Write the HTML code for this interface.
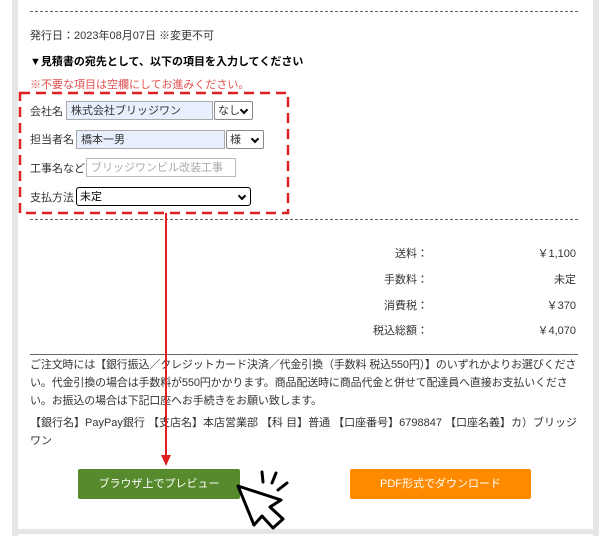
<!DOCTYPE html>
<html><head><meta charset="utf-8"><style>
body{margin:0;width:610px;height:536px;background:#fff;position:relative;overflow:hidden;font-family:"Liberation Sans","Noto Sans CJK JP",sans-serif;font-size:11px;color:#333}
.a{position:absolute;white-space:nowrap}
.inp{position:absolute;height:19px;box-sizing:border-box;border:1px solid #aaa;background:#e8f0fe;font-size:11px;padding:2px 4px;line-height:14px}
.sel{position:absolute;height:19px;box-sizing:border-box;border:1px solid #888;background:#fff;font-size:11px;padding:2px 3px;line-height:14px;border-radius:2px}
.sel:after{content:"";position:absolute;right:5px;top:5px;width:4px;height:4px;border-right:2px solid #000;border-bottom:2px solid #000;transform:rotate(45deg)}
.r{text-align:right}
</style></head><body>
<div class="a" style="left:12px;top:0;width:6px;height:536px;background:#e6e6e6"></div>
<div class="a" style="left:593px;top:0;width:6px;height:536px;background:#e6e6e6"></div>
<div class="a" style="left:12px;top:529px;width:587px;height:5px;background:#e6e6e6"></div>
<div class="a" style="left:30px;top:11px;width:548px;border-top:1px dashed #666"></div>
<div class="a" style="left:30px;top:27px">発行日：2023年08月07日 ※変更不可</div>
<div class="a" style="left:30px;top:53px;font-weight:bold;color:#000">▼見積書の宛先として、以下の項目を入力してください</div>
<div class="a" style="left:30px;top:76px;color:#e05050">※不要な項目は空欄にしてお進みください。</div>
<svg class="a" style="left:18px;top:91px" width="272" height="124"><rect x="2" y="2" width="268" height="120" fill="none" stroke="#e02020" stroke-width="2.5" stroke-dasharray="10,6"/></svg>
<div class="a" style="left:30px;top:103px">会社名</div>
<div class="inp" style="left:66px;top:101px;width:147px">株式会社ブリッジワン</div>
<div class="sel" style="left:214px;top:101px;width:39px">なし</div>
<div class="a" style="left:30px;top:131px">担当者名</div>
<div class="inp" style="left:76px;top:130px;width:149px">橋本一男</div>
<div class="sel" style="left:226px;top:130px;width:38px">様</div>
<div class="a" style="left:30px;top:160px">工事名など</div>
<div class="inp" style="left:86px;top:158px;width:150px;background:#fff;color:#aaa;border-color:#bbb">ブリッジワンビル改装工事</div>
<div class="a" style="left:30px;top:189px">支払方法</div>
<div class="sel" style="left:76px;top:187px;width:175px;border:1px solid #000;border-radius:3px;color:#000">未定</div>
<div class="a" style="left:30px;top:219px;width:548px;border-top:1px dashed #666"></div>
<div class="a r" style="left:330px;top:245px;width:98px">送料：</div><div class="a r" style="left:480px;top:245px;width:96px">￥1,100</div>
<div class="a r" style="left:330px;top:271px;width:98px">手数料：</div><div class="a r" style="left:480px;top:271px;width:96px">未定</div>
<div class="a r" style="left:330px;top:297px;width:98px">消費税：</div><div class="a r" style="left:480px;top:297px;width:96px">￥370</div>
<div class="a r" style="left:330px;top:322px;width:98px">税込総額：</div><div class="a r" style="left:480px;top:322px;width:96px">￥4,070</div>
<div class="a" style="left:30px;top:354px;width:548px;border-top:1px solid #666"></div>
<div class="a" style="left:30px;top:356px;line-height:18px;width:552px;white-space:normal;letter-spacing:-0.15px">ご注文時には【銀行振込／クレジットカード決済／代金引換（手数料 税込550円）】のいずれかよりお選びください。代金引換の場合は手数料が550円かかります。商品配送時に商品代金と併せて配達員へ直接お支払いください。お振込の場合は下記口座へお手続きをお願い致します。</div>
<div class="a" style="left:30px;top:414px;line-height:18px;width:550px;white-space:normal">【銀行名】PayPay銀行 【支店名】本店営業部 【科 目】普通 【口座番号】6798847 【口座名義】カ）ブリッジワン</div>
<div class="a" style="left:78px;top:469px;width:162px;height:30px;background:#568a2c;border-radius:2px;color:#fff;text-align:center;line-height:30px">ブラウザ上でプレビュー</div>
<div class="a" style="left:350px;top:469px;width:181px;height:30px;background:#ff8a00;border-radius:2px;color:#fff;text-align:center;line-height:30px">PDF形式でダウンロード</div>
<svg class="a" style="left:0;top:0" width="610" height="536">
<line x1="166" y1="213" x2="166" y2="458" stroke="#e02020" stroke-width="2"/>
<polygon points="161,455 171,455 166,466" fill="#e02020"/>
<polygon points="238,486 281,500 270,507 283,519 273,528 262,516 254,525" fill="#fff" stroke="#000" stroke-width="3" stroke-linejoin="round"/>
<g stroke="#000" stroke-width="3" stroke-linecap="round">
<line x1="262" y1="472" x2="263" y2="482"/><line x1="276" y1="473" x2="272" y2="483"/><line x1="287" y1="483" x2="278" y2="490"/></g>
</svg>
</body></html>
